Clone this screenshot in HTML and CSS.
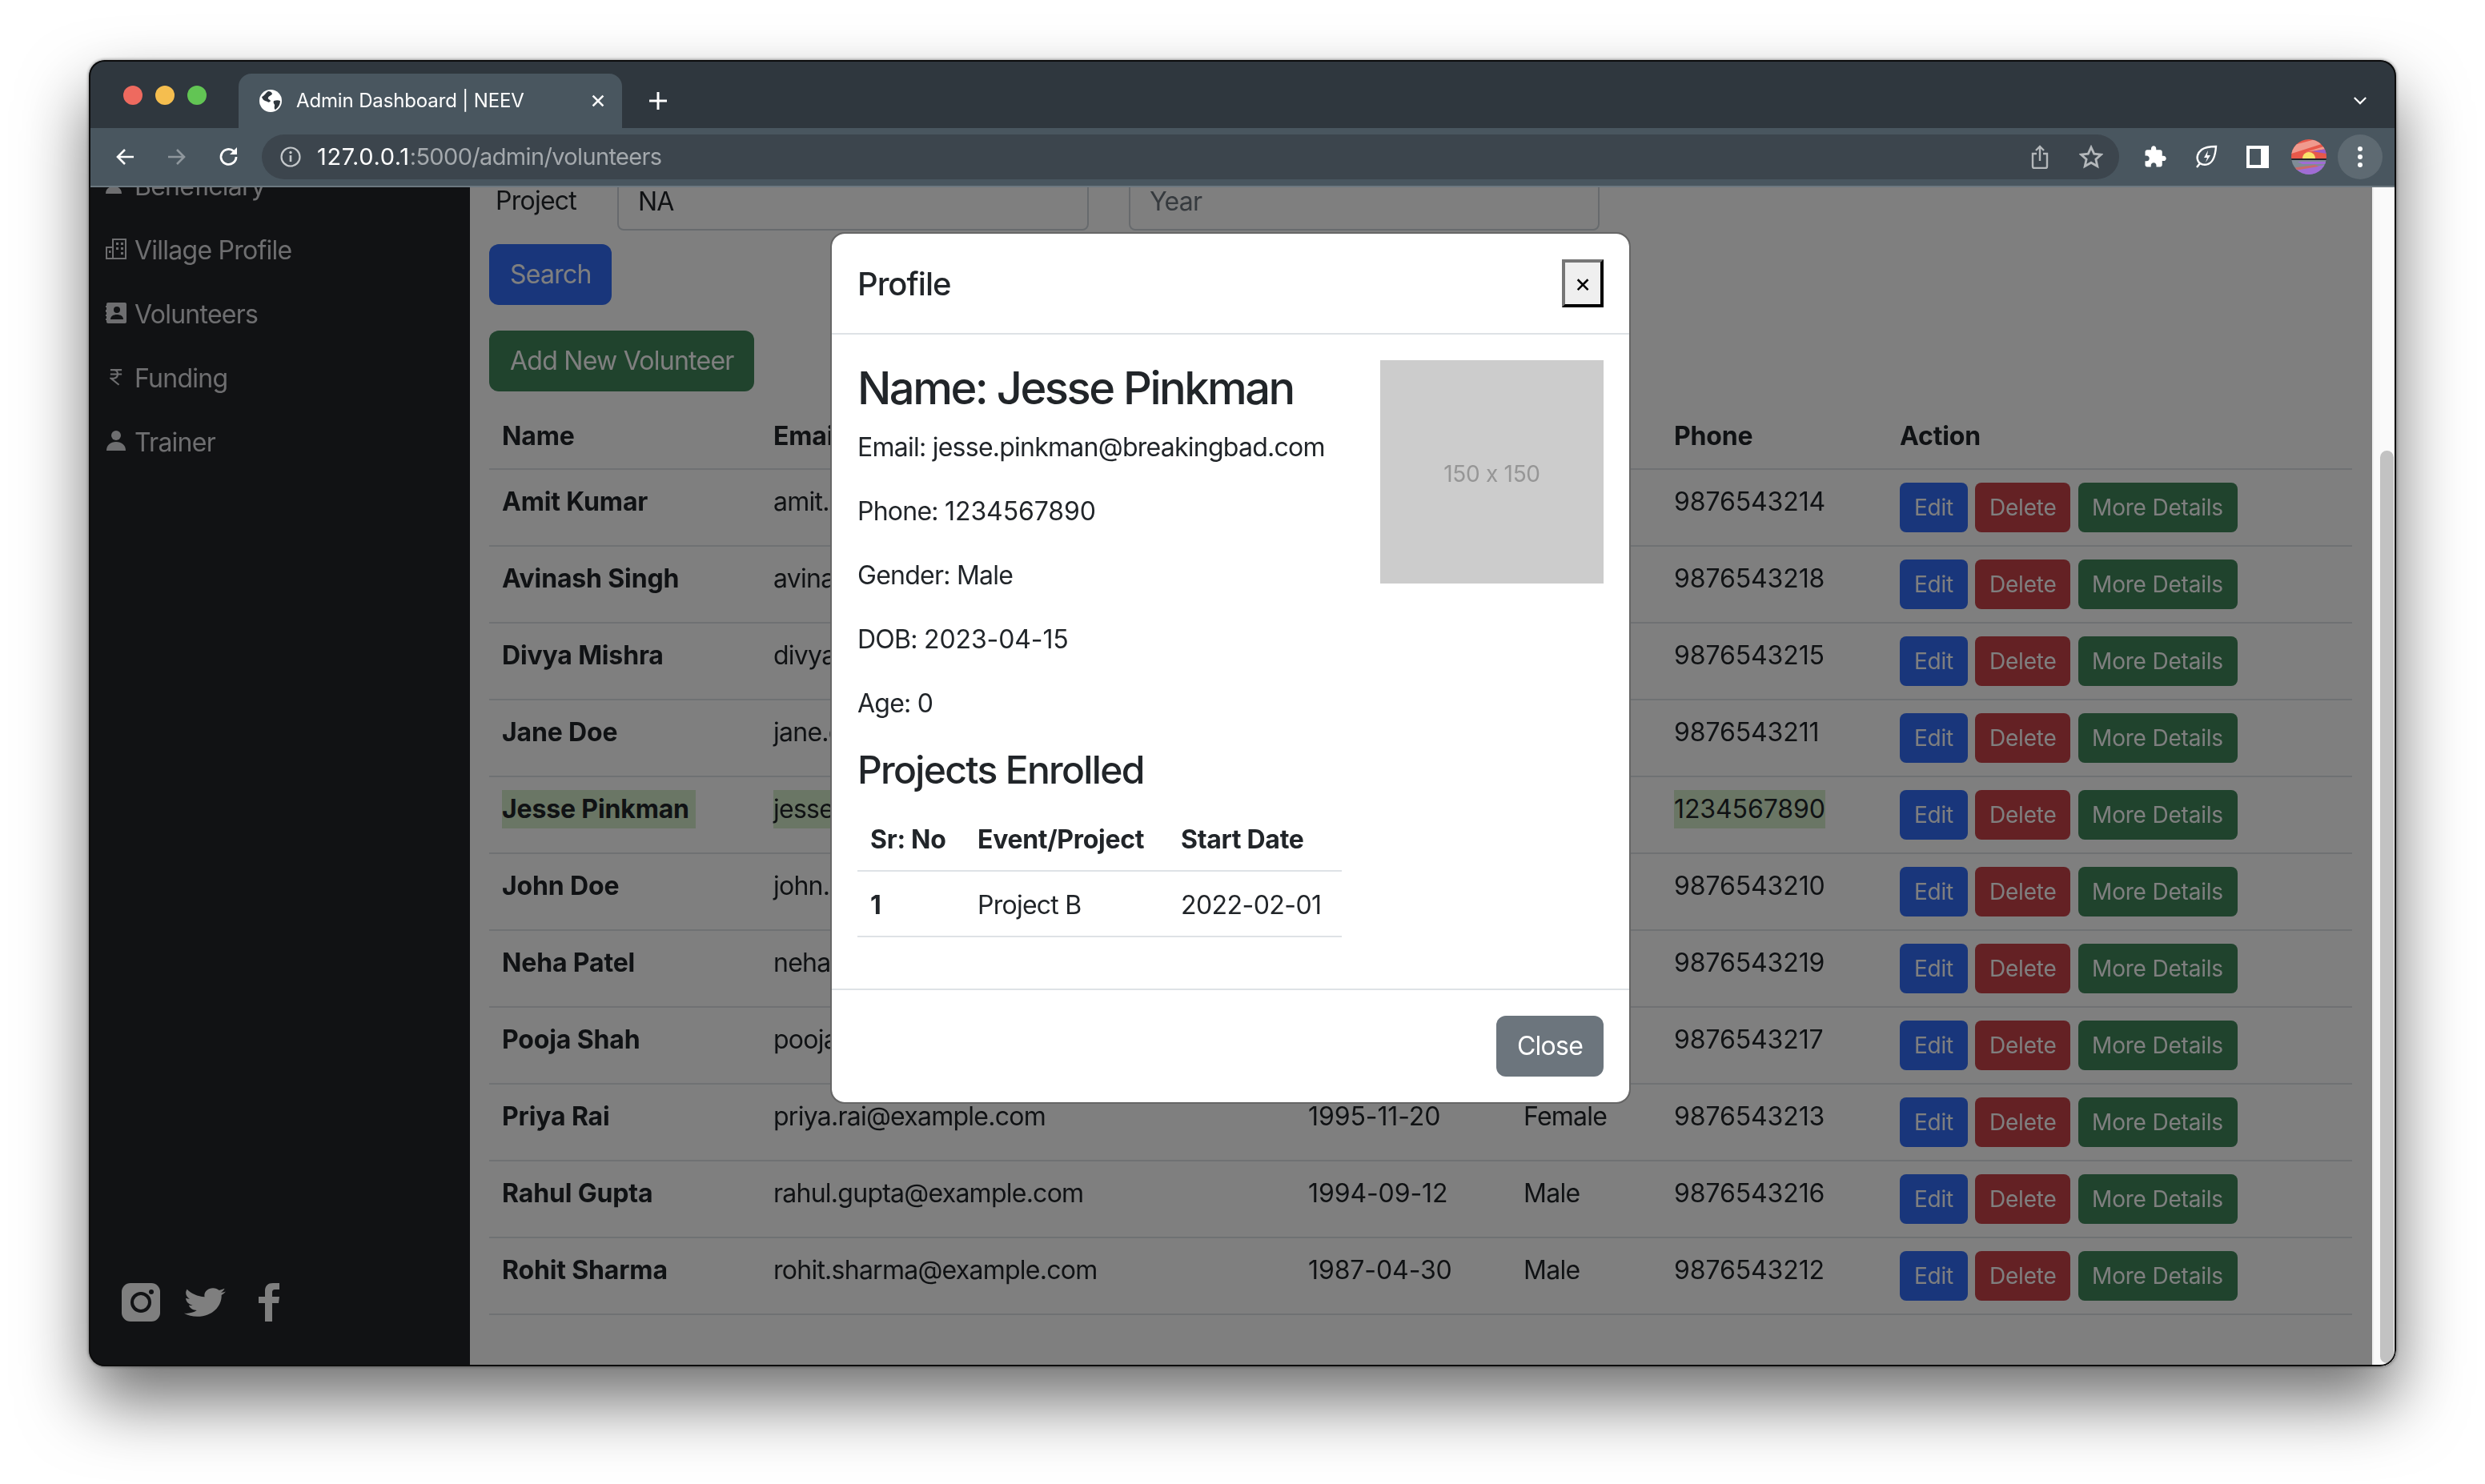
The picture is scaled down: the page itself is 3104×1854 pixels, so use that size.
FILE: index.html
```html
<!DOCTYPE html>
<html lang="en">
<head>
<meta charset="utf-8">
<title>Admin Dashboard | NEEV</title>
<link rel="stylesheet" href="styles.css">
</head>
<body>
<div class="window">
  <header class="tabbar">
    <div class="lights"><i class="light red"></i><i class="light amber"></i><i class="light green"></i></div>
    <div class="tab">
      <svg class="globe" viewBox="0 0 28 28"><circle cx="14" cy="14" r="14" fill="#fff"/><path d="M3 9c3-1 5-5 8-7 3 0 4 1 5 3-1 3-4 2-5 5-1 2 2 2 3 4-1 2-3 2-4 1-3-1-6-2-7-6zM18 14c3-1 6-1 8 0 0 4-2 8-6 11-2-1-1-4-1-6-1-2-2-3-1-5z" fill="#2f373e"/></svg>
      <span class="tab-title">Admin Dashboard | NEEV</span>
      <svg class="tab-x" viewBox="0 0 14 14"><path d="M2 2l10 10M12 2L2 12" stroke="#fff" stroke-width="2"/></svg>
    </div>
    <svg class="plus" viewBox="0 0 24 24"><path d="M12 1v22M1 12h22" stroke="#fff" stroke-width="3"/></svg>
    <svg class="chev" viewBox="0 0 20 12"><path d="M2 2l8 8 8-8" fill="none" stroke="#fff" stroke-width="2.4"/></svg>
  </header>
  <nav class="toolbar">
    <svg class="tool-btn" viewBox="0 0 28 28"><path d="M24 14H5M13 5l-9 9 9 9" fill="none" stroke="#fff" stroke-width="2.6"/></svg>
    <svg class="tool-btn fwd" viewBox="0 0 28 28"><path d="M4 14h19M15 5l9 9-9 9" fill="none" stroke="#8f979d" stroke-width="2.6"/></svg>
    <svg class="tool-btn reload" viewBox="0 0 28 28"><path d="M23 14a9.500 9.500 0 1 1-3-7" fill="none" stroke="#fff" stroke-width="2.8"/><path d="M24 2v9h-9z" fill="#fff"/></svg>
    <div class="omnibox">
      <svg class="info" viewBox="0 0 26 26"><circle cx="13" cy="13" r="11.500" fill="none" stroke="#c4c8cb" stroke-width="2.200"/><path d="M13 11v8" stroke="#c4c8cb" stroke-width="2.600"/><circle cx="13" cy="7.500" r="1.700" fill="#c4c8cb"/></svg>
      <span class="url"><b>127.0.0.1</b>:5000/admin/volunteers</span>
      <svg class="share" viewBox="0 0 24 30"><path d="M8 11H3v16a2 2 0 0 0 2 2h14a2 2 0 0 0 2-2V11h-5" fill="none" stroke="#b4b8bb" stroke-width="2.400"/><path d="M12 20V3M7 7l5-5 5 5" fill="none" stroke="#b4b8bb" stroke-width="2.400"/></svg>
      <svg class="star" viewBox="0 0 30 30"><path d="M15 3l3.700 8.200 8.800.9-6.600 5.900 1.900 8.700-7.800-4.500-7.800 4.500 1.900-8.700L2.500 12.100l8.800-.9z" fill="none" stroke="#b4b8bb" stroke-width="2.800"/></svg>
    </div>
    <svg class="ext puzzle" viewBox="0 0 24 24"><path fill="#fff" d="M20.500 11H19V7c0-1.100-.9-2-2-2h-4V3.500C13 2.120 11.880 1 10.500 1S8 2.120 8 3.500V5H4c-1.100 0-1.990.9-1.990 2v3.800H3.500c1.490 0 2.700 1.210 2.700 2.700s-1.210 2.700-2.700 2.700H2V20c0 1.100.9 2 2 2h3.800v-1.500c0-1.490 1.210-2.700 2.700-2.700 1.490 0 2.700 1.210 2.700 2.700V22H17c1.100 0 2-.9 2-2v-4h1.500c1.380 0 2.500-1.120 2.500-2.500S21.880 11 20.500 11z"/></svg>
    <svg class="ext leaf" viewBox="0 0 30 30"><path d="M27 2c-8 0-14 1-18 4C4 10 2 16 5 21c2 3 7 5 12 3 6-2 9-9 10-22zM7 23l-4 5" fill="none" stroke="#fff" stroke-width="2.400"/><path d="M17 7l-5 9h4l-2 6 6-9h-4z" fill="#fff"/></svg>
    <div class="ext panel-ic"></div>
    <svg class="avatar" viewBox="0 0 44 44">
      <defs><clipPath id="av"><circle cx="22" cy="22" r="22"/></clipPath></defs>
      <g clip-path="url(#av)">
        <rect width="44" height="24" fill="#e8584a"/>
        <path d="M0 8L30 0h14v4L0 18zM18 16l26-8v4z" fill="#f09a8e"/>
        <path d="M26 15l18-3v6z" fill="#9a5bc9"/>
        <path d="M14 24a8 8 0 0 1 16 0z" fill="#f8e36a"/>
        <rect y="24" width="44" height="2" fill="#24252c"/>
        <rect y="26" width="44" height="18" fill="#7f8c96"/>
        <path d="M8 28h36v3H14zM0 38l44-6v12H0z" fill="#a06cd5"/>
        <path d="M0 36l30-4 4 2-30 5z" fill="#c86a6a"/>
      </g>
    </svg>
    <div class="menu-btn"><i></i><i></i><i></i></div>
  </nav>
  <div class="page">
    <aside class="sidebar">
      <ul class="nav">
        <li class="nav-item"><svg class="nav-ic" viewBox="0 0 26 26"><circle cx="10" cy="7" r="6" fill="currentColor"/><path d="M0 24c0-6 4-9 10-9s10 3 10 9zM18 8h8v3h-8z" fill="currentColor"/></svg>Beneficiary</li>
        <li class="nav-item"><svg class="nav-ic" viewBox="0 0 26 26"><path d="M1 25V11h8V1h16v24z" fill="none" stroke="currentColor" stroke-width="2"/><path d="M9 11v14" stroke="currentColor" stroke-width="2"/><path d="M13 5h3v3h-3zM19 5h3v3h-3zM13 11h3v3h-3zM19 11h3v3h-3zM19 17h3v3h-3zM4 15h2.500v3H4z" fill="currentColor"/></svg>Village Profile</li>
        <li class="nav-item"><svg class="nav-ic" viewBox="0 0 26 26"><path d="M3 0h21a2 2 0 0 1 2 2v22a2 2 0 0 1-2 2H3a2 2 0 0 1-2-2v-2H0v-2h1v-3H0v-2h1v-3H0V9h1V6H0V4h1V2a2 2 0 0 1 2-2z" fill="currentColor"/><circle cx="14" cy="9" r="4" fill="#222428"/><path d="M6 21c0-4 3.500-6 8-6s8 2 8 6z" fill="#222428"/></svg>Volunteers</li>
        <li class="nav-item"><svg class="nav-ic rupee" viewBox="0 0 18 24"><path d="M1 2h16M1 8h16M3 2h3c7 0 7 11 0 12H2l11 9" fill="none" stroke="currentColor" stroke-width="2.400"/></svg>Funding</li>
        <li class="nav-item"><svg class="nav-ic" viewBox="0 0 26 26"><circle cx="13" cy="6" r="6" fill="currentColor"/><path d="M1 25c0-7 5-11 12-11s12 4 12 11z" fill="currentColor"/></svg>Trainer</li>
      </ul>
      <div class="social">
        <svg class="insta" viewBox="0 0 48 48"><rect width="48" height="48" rx="11" fill="#fff"/><circle cx="24" cy="24" r="11" fill="none" stroke="#222428" stroke-width="4"/><circle cx="37" cy="11" r="3" fill="#222428"/></svg>
        <svg class="twitter" viewBox="0 0 512 512" preserveAspectRatio="none"><path fill="#fff" d="M459.370 151.716c.325 4.548.325 9.097.325 13.645 0 138.720-105.583 298.558-298.558 298.558-59.452 0-114.680-17.219-161.137-47.106 8.447.974 16.568 1.299 25.340 1.299 49.055 0 94.213-16.568 130.274-44.832-46.132-.975-84.792-31.188-98.112-72.772 6.498.974 12.995 1.624 19.818 1.624 9.421 0 18.843-1.300 27.614-3.573-48.081-9.747-84.143-51.980-84.143-102.985v-1.299c13.969 7.797 30.214 12.670 47.431 13.319-28.264-18.843-46.781-51.005-46.781-87.391 0-19.492 5.197-37.360 14.294-52.954 51.655 63.675 129.300 105.258 216.365 109.807-1.624-7.797-2.599-15.918-2.599-24.040 0-57.828 46.782-104.934 104.934-104.934 30.213 0 57.502 12.670 76.670 33.137 23.715-4.548 46.456-13.320 66.599-25.340-7.798 24.366-24.366 44.833-46.132 57.827 21.117-2.273 41.584-8.122 60.426-16.243-14.292 20.791-32.161 39.308-52.628 54.253z"/></svg>
        <svg class="fb" viewBox="0 0 26 48"><path fill="#fff" d="M8 48V25H0v-8h8v-7C8 3 12 0 18 0h8v8h-5c-3 0-4 1-4 4v5h9l-1 8h-8v23z"/></svg>
      </div>
    </aside>
    <main class="main">
      <form class="filter">
        <label class="filter-label">Project</label>
        <div class="input input-project">NA</div>
        <div class="input input-year">Year</div>
      </form>
      <button class="btn btn-blue btn-search" type="button">Search</button>
      <button class="btn btn-green btn-add" type="button">Add New Volunteer</button>
      <table class="table">
        <thead><tr><th class="c-name">Name</th><th class="c-email">Email</th><th class="c-dob">DOB</th><th class="c-gender">Gender</th><th class="c-phone">Phone</th><th class="c-action">Action</th></tr></thead>
        <tbody>
          <tr><th>Amit Kumar</th><td>amit.kumar@example.com</td><td class="num">1990-03-18</td><td>Male</td><td class="num">9876543214</td><td><button class="sm sm-blue">Edit</button> <button class="sm sm-red">Delete</button> <button class="sm sm-green">More Details</button></td></tr>
          <tr><th>Avinash Singh</th><td>avinash.singh@example.com</td><td class="num">1992-06-25</td><td>Male</td><td class="num">9876543218</td><td><button class="sm sm-blue">Edit</button> <button class="sm sm-red">Delete</button> <button class="sm sm-green">More Details</button></td></tr>
          <tr><th>Divya Mishra</th><td>divya.mishra@example.com</td><td class="num">1993-01-09</td><td>Female</td><td class="num">9876543215</td><td><button class="sm sm-blue">Edit</button> <button class="sm sm-red">Delete</button> <button class="sm sm-green">More Details</button></td></tr>
          <tr><th>Jane Doe</th><td>jane.doe@example.com</td><td class="num">1991-07-14</td><td>Female</td><td class="num">9876543211</td><td><button class="sm sm-blue">Edit</button> <button class="sm sm-red">Delete</button> <button class="sm sm-green">More Details</button></td></tr>
          <tr><th><mark class="mark-name">Jesse Pinkman</mark></th><td><mark>jesse.pinkman@breakingbad.com</mark></td><td class="num">2023-04-15</td><td>Male</td><td class="num"><mark>1234567890</mark></td><td><button class="sm sm-blue">Edit</button> <button class="sm sm-red">Delete</button> <button class="sm sm-green">More Details</button></td></tr>
          <tr><th>John Doe</th><td>john.doe@example.com</td><td class="num">1989-12-02</td><td>Male</td><td class="num">9876543210</td><td><button class="sm sm-blue">Edit</button> <button class="sm sm-red">Delete</button> <button class="sm sm-green">More Details</button></td></tr>
          <tr><th>Neha Patel</th><td>neha.patel@example.com</td><td class="num">1996-08-21</td><td>Female</td><td class="num">9876543219</td><td><button class="sm sm-blue">Edit</button> <button class="sm sm-red">Delete</button> <button class="sm sm-green">More Details</button></td></tr>
          <tr><th>Pooja Shah</th><td>pooja.shah@example.com</td><td class="num">1997-05-11</td><td>Female</td><td class="num">9876543217</td><td><button class="sm sm-blue">Edit</button> <button class="sm sm-red">Delete</button> <button class="sm sm-green">More Details</button></td></tr>
          <tr><th>Priya Rai</th><td>priya.rai@example.com</td><td class="num">1995-11-20</td><td>Female</td><td class="num">9876543213</td><td><button class="sm sm-blue">Edit</button> <button class="sm sm-red">Delete</button> <button class="sm sm-green">More Details</button></td></tr>
          <tr><th>Rahul Gupta</th><td>rahul.gupta@example.com</td><td class="num">1994-09-12</td><td>Male</td><td class="num">9876543216</td><td><button class="sm sm-blue">Edit</button> <button class="sm sm-red">Delete</button> <button class="sm sm-green">More Details</button></td></tr>
          <tr><th>Rohit Sharma</th><td>rohit.sharma@example.com</td><td class="num">1987-04-30</td><td>Male</td><td class="num">9876543212</td><td><button class="sm sm-blue">Edit</button> <button class="sm sm-red">Delete</button> <button class="sm sm-green">More Details</button></td></tr>
        </tbody>
      </table>
    </main>
    <div class="scrollbar"><div class="thumb"></div></div>
    <div class="backdrop"></div>
    <section class="modal">
      <div class="modal-header">
        <h5 class="modal-title">Profile</h5>
        <button class="modal-x" type="button">×</button>
      </div>
      <div class="modal-body">
        <div class="profile">
          <h3 class="profile-name">Name: Jesse Pinkman</h3>
          <p>Email: jesse.pinkman@breakingbad.com</p>
          <p>Phone: <span class="num">1234567890</span></p>
          <p>Gender: Male</p>
          <p>DOB: <span class="num">2023-04-15</span></p>
          <p>Age: 0</p>
          <h4 class="profile-sub">Projects Enrolled</h4>
          <table class="mini">
            <thead><tr><th class="m-sr">Sr: No</th><th class="m-ev">Event/Project</th><th class="m-date">Start Date</th></tr></thead>
            <tbody><tr><th>1</th><td>Project B</td><td class="date">2022-02-01</td></tr></tbody>
          </table>
        </div>
        <div class="placeholder">150 x 150</div>
      </div>
      <div class="modal-footer"><button class="btn-close" type="button">Close</button></div>
    </section>
  </div>
</div>
</body>
</html>
```
FILE: styles.css
```css
* { box-sizing: border-box; }
html, body { margin: 0; height: 100%; }
body { background: #fff; padding: 75px 0 0 111px; font-family: Inter, "Liberation Sans", sans-serif; font-size: 32px; line-height: 48px; letter-spacing: -.75px; color: #212529; overflow: hidden; }
svg { display: block; flex: none; }
.num { letter-spacing: -.1px; }

.window { position: relative; width: 2882px; height: 1632px; display: flex; flex-direction: column; border-radius: 20px; overflow: hidden; }
body::before { content: ""; position: fixed; left: 111px; top: 75px; width: 2882px; height: 1632px; border-radius: 20px; box-shadow: 0 44px 84px rgba(0,0,0,.56), 0 0 4px rgba(0,0,0,.5); }
.window::after { content: ""; position: absolute; inset: 0; border-radius: 20px; border: 2px solid #0c0c0c; pointer-events: none; z-index: 10; }

.tabbar { height: 85px; flex: none; background: #2f373e; display: flex; align-items: flex-end; position: relative; }
.lights { display: flex; gap: 16px; align-self: flex-start; padding: 32px 0 0 43px; width: 187px; }
.light { width: 24px; height: 24px; border-radius: 50%; }
.red { background: #ee6a5f; }
.amber { background: #f5be4f; }
.green { background: #62c554; }
.tab { width: 479px; height: 68px; background: #49565f; border-radius: 16px 16px 0 0; display: flex; align-items: center; padding: 0 0 0 26px; color: #fff; }
.globe { width: 28px; height: 28px; }
.tab-title { font-size: 24px; line-height: 34px; margin-left: 18px; width: 368px; white-space: nowrap; letter-spacing: -.14px; }
.tab-x { width: 18px; height: 18px; }
.plus { width: 24px; height: 24px; margin: 0 0 22px 33px; }
.chev { width: 18px; height: 11px; margin: 0 36px 29px auto; }

.toolbar { height: 74px; flex: none; background: #49565f; border-bottom: 2px solid #6c7880; display: flex; align-items: center; padding: 0 0 0 32px; }
.tool-btn { width: 28px; height: 28px; }
.fwd { margin-left: 35px; }
.reload { margin-left: 38px; }
.omnibox { width: 2320px; height: 56px; margin-left: 27px; background: #3c454d; border-radius: 28px; display: flex; align-items: center; padding-left: 23px; }
.info { width: 26px; height: 26px; }
.url { font-size: 29px; line-height: 40px; margin-left: 20px; color: #a4a9ad; white-space: nowrap; width: 2140px; letter-spacing: -.65px; }
.url b { font-weight: 400; color: #fff; letter-spacing: .6px; }
.share { width: 24px; height: 30px; }
.star { width: 30px; height: 30px; margin-left: 37px; }
.ext { width: 30px; height: 30px; }
.puzzle { margin-left: 30px; }
.leaf { margin-left: 34px; }
.panel-ic { width: 28px; height: 28px; margin-left: 35px; background: #49565f; border: solid #fff; border-width: 4px 10px 4px 4px; }
.avatar { width: 44px; height: 44px; margin-left: 28px; }
.menu-btn { width: 56px; height: 56px; margin-left: 14px; border-radius: 50%; background: #5e6a72; display: flex; flex-direction: column; align-items: center; justify-content: center; gap: 4px; }
.menu-btn i { width: 6px; height: 6px; border-radius: 50%; background: #fff; }

.page { flex: 1; min-height: 0; display: flex; position: relative; }
.sidebar { width: 476px; flex: none; background: #222428; color: #dcdde0; display: flex; flex-direction: column; overflow: hidden; }
.nav { list-style: none; margin: -41px 0 0; padding: 0 0 0 21px; }
.nav-item { height: 80px; display: flex; align-items: center; gap: 10px; }
.nav-ic { width: 26px; height: 26px; margin-top: -4px; }
.rupee { width: 16px; height: 24px; margin-left: 5px; margin-right: 5px; }
.social { margin-top: auto; padding: 0 0 56px 41px; display: flex; align-items: center; gap: 30px; }
.insta { width: 48px; height: 48px; }
.twitter { width: 52px; height: 44px; }
.fb { width: 26px; height: 48px; margin-left: 11px; }

.main { flex: 1; min-width: 0; background: #fff; padding: 0 24px 64px; display: flex; flex-direction: column; justify-content: flex-end; align-items: flex-start; overflow: hidden; }
.filter { display: flex; align-items: center; flex: none; margin-bottom: 17px; }
.filter-label { width: 160px; padding: 2px 0 0 8px; }
.input { height: 76px; border: 2px solid #ced4da; border-radius: 8px; padding: 14px 24px 10px; line-height: 48px; }
.input-project { width: 589px; }
.input-year { width: 588px; margin-left: 50px; color: #6c757d; }
.btn { flex: none; height: 76px; border: 0; border-radius: 12px; color: #fff; font: 400 32px/48px Inter, "Liberation Sans", sans-serif; letter-spacing: -.75px; padding: 0 26px; }
.btn-blue { background: #326df6; }
.btn-green { background: #40865a; }
.btn-search { width: 153px; margin-bottom: 32px; }
.btn-add { width: 331px; margin-bottom: 16px; white-space: nowrap; }

.table { width: 2327px; flex: none; border-collapse: collapse; table-layout: fixed; }
.table th, .table td { padding: 16px; border-bottom: 2px solid #dee2e6; text-align: left; vertical-align: top; white-space: nowrap; overflow: hidden; }
.table th { font-weight: 700; letter-spacing: -.15px; }
.c-name { width: 339px; }
.c-email { width: 668px; }
.c-dob { width: 269px; }
.c-gender { width: 188px; }
.c-phone { width: 282px; }
.c-action { width: 581px; }
mark { display: inline-block; background: #d5edcb; color: inherit; }
.mark-name { padding-right: 8px; }

.sm { height: 62px; border: 0; border-radius: 8px; color: #fff; font: 400 28px/42px Inter, "Liberation Sans", sans-serif; letter-spacing: -.2px; padding: 0; vertical-align: top; }
.sm-blue { background: #326df6; width: 85px; }
.sm-red { background: #c84248; width: 119px; margin-left: 1px; }
.sm-green { background: #40865a; width: 199px; margin-left: 1px; }

.scrollbar { width: 30px; flex: none; background: #fafafa; border-left: 2px solid #f0f0f0; padding: 329px 3px 4px 8px; }
.thumb { height: 100%; background: #c2c2c2; border-radius: 9px; }

.backdrop { position: absolute; left: 0; top: 0; bottom: 0; right: 30px; background: rgba(0,0,0,.5); }

.modal { position: absolute; left: 926px; top: 56px; width: 1000px; background: #fff; border-radius: 18px; border: 2px solid #666; background-clip: padding-box; }
.modal-header { display: flex; align-items: center; justify-content: space-between; padding: 32px; border-bottom: 2px solid #dee2e6; }
.modal-title { margin: 0; padding-top: 2px; font-size: 40px; font-weight: 500; line-height: 58px; letter-spacing: -1px; }
.modal-x { width: 52px; height: 60px; padding: 0; background: #efefef; border: 4px outset #767676; border-color: #767676 #2a2a2a #2a2a2a #767676; color: #000; font: 32px/1 Inter, "Liberation Sans", sans-serif; }
.modal-body { display: flex; justify-content: space-between; padding: 32px; }
.profile { width: 605px; }
.profile-name { margin: 0 0 14px; padding-top: 2px; font-size: 56px; font-weight: 500; line-height: 67px; letter-spacing: -2.5px; }
.profile p { margin: 0 0 30px; padding-top: 2px; white-space: nowrap; }
.profile-sub { margin: 0 0 16px; font-size: 48px; font-weight: 500; line-height: 58px; letter-spacing: -1.7px; }
.placeholder { width: 279px; height: 279px; padding-top: 4px; background: #ccc; color: #969696; font-size: 28px; letter-spacing: -.3px; font-feature-settings: "calt" 0; display: flex; align-items: center; justify-content: center; }
.mini { width: 605px; table-layout: fixed; border-collapse: collapse; margin-bottom: 32px; }
.mini th, .mini td { padding: 18px 16px 14px; border-bottom: 2px solid #dee2e6; text-align: left; white-space: nowrap; vertical-align: top; }
.mini th { font-weight: 700; letter-spacing: -.3px; }
.mini .date { letter-spacing: -.55px; }
.m-sr { width: 134px; }
.m-ev { width: 254px; }
.m-date { width: 217px; }
.modal-footer { display: flex; justify-content: flex-end; padding: 32px; border-top: 2px solid #dee2e6; }
.btn-close { width: 134px; height: 76px; border: 0; border-radius: 12px; background: #6c757d; color: #fff; font: 400 32px/48px Inter, "Liberation Sans", sans-serif; letter-spacing: -.75px; padding: 0; }
```
